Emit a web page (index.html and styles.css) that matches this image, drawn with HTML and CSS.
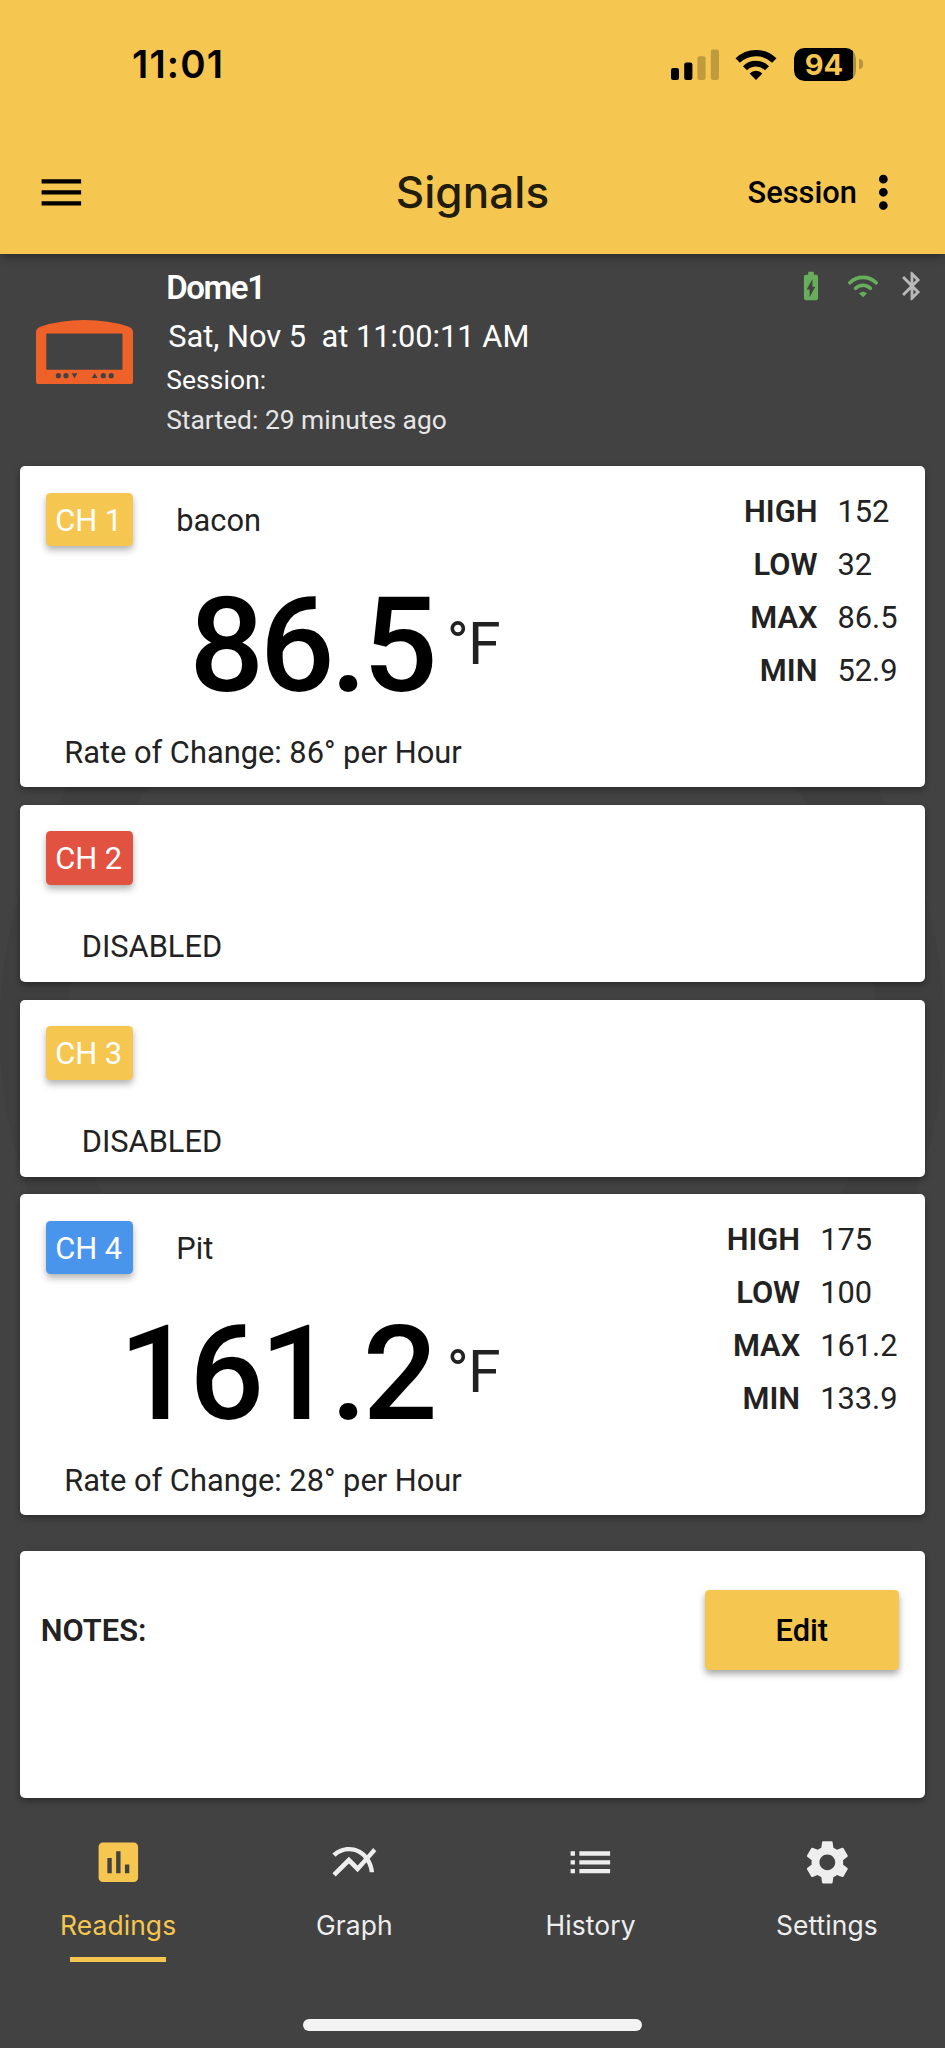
FILE: index.html
```html
<!DOCTYPE html>
<html lang="en">
  <head>
    <meta charset="UTF-8" />
    <meta name="viewport" content="width=device-width, initial-scale=1.0" />
    <title>Signals</title>
    <link rel="stylesheet" href="styles.css" />
  </head>
  <body>
    <header class="header">
      <div class="status-bar">
        <span class="time">11:01</span>
        <div class="status-icons">
          <svg class="cell" width="48" height="31" viewBox="0 0 48 31">
            <rect x="0" y="19" width="8" height="12" rx="2.2" />
            <rect x="13.2" y="13.6" width="8.2" height="17.4" rx="2.2" />
            <rect x="26.4" y="7.2" width="8.2" height="23.8" rx="2.2" opacity="0.22" />
            <rect x="39.8" y="0.4" width="8.2" height="30.6" rx="2.2" opacity="0.22" />
          </svg>
          <svg class="wifi" width="42" height="31" viewBox="0 0 42 31">
            <path d="M2.7 11.5 A26.2 26.2 0 0 1 39.3 11.5" fill="none" stroke="#000" stroke-width="6.2" />
            <path d="M10 19.2 A15.6 15.6 0 0 1 32 19.2" fill="none" stroke="#000" stroke-width="5.8" />
            <path d="M21 31 L14.6 24.4 A9.2 9.2 0 0 1 27.4 24.4 Z" />
          </svg>
          <div class="battery">94</div>
        </div>
      </div>
      <div class="toolbar">
        <svg class="icon" viewBox="0 0 24 24"><path d="M3 18h18v-2H3v2zm0-5h18v-2H3v2zm0-7v2h18V6H3z" /></svg>
        <h1>Signals</h1>
        <div class="toolbar-end">
          <span>Session</span>
          <svg class="icon" viewBox="0 0 24 24"><path d="M12 8c1.1 0 2-.9 2-2s-.9-2-2-2-2 .9-2 2 .9 2 2 2zm0 2c-1.1 0-2 .9-2 2s.9 2 2 2 2-.9 2-2-.9-2-2-2zm0 6c-1.1 0-2 .9-2 2s.9 2 2 2 2-.9 2-2-.9-2-2-2z" /></svg>
        </div>
      </div>
    </header>

    <main>
      <section class="device">
        <svg class="device-icon" width="97" height="64" viewBox="0 0 97 64">
          <path fill="#ee6229" fill-rule="evenodd" d="M0 62V12Q0 8 5 6.5Q24 0 48.5 0T92 6.5Q97 8 97 12V62Q97 64 95 64H2Q0 64 0 62ZM10.3 13.5V49.8H86.5V13.5Z" />
          <g fill="#424242">
            <circle cx="22.4" cy="55.7" r="2.6" />
            <circle cx="30" cy="55.7" r="2.6" />
            <path d="M35.6 53.3h5.8l-2.9 5zM55.8 58h5.8l-2.9-5z" />
            <circle cx="67.3" cy="55.7" r="2.6" />
            <circle cx="75.2" cy="55.7" r="2.6" />
          </g>
        </svg>
        <div class="device-info">
          <h2>Dome1</h2>
          <p class="date">Sat, Nov 5&nbsp; at 11:00:11 AM</p>
          <p class="session">Session:</p>
          <p class="started">Started: 29 minutes ago</p>
        </div>
        <div class="device-status">
          <svg width="34" height="34" viewBox="0 0 24 24" fill="#67ad5b"><path d="M15.67 4H14V2h-4v2H8.33C7.6 4 7 4.6 7 5.33v15.33C7 21.4 7.6 22 8.33 22h7.33c.74 0 1.34-.6 1.34-1.33V5.33C17 4.6 16.4 4 15.67 4zM11 20v-5.5H9L13 7v5.5h2L11 20z" /></svg>
          <svg width="30" height="23" viewBox="0 0 30 23" fill="none" stroke="#67ad5b">
            <path d="M1.9 7.8 A18.5 18.5 0 0 1 28.1 7.8" stroke-width="3.6" stroke-linecap="round" />
            <path d="M7.6 13.3 A10.5 10.5 0 0 1 22.4 13.3" stroke-width="3.6" stroke-linecap="round" />
            <path d="M15 22l-3.6-3.6q3.6-2.8 7.2 0z" fill="#67ad5b" stroke-width="0.6" />
          </svg>
          <svg width="34" height="34" viewBox="0 0 24 24" fill="#b9b9b9"><path d="M17.71 7.71L12 2h-1v7.59L6.41 5 5 6.41 10.59 12 5 17.59 6.41 19 11 14.41V22h1l5.71-5.71-4.3-4.29 4.3-4.29zM13 5.83l1.88 1.88L13 9.59V5.83zm1.88 10.46L13 18.17v-3.76l1.88 1.88z" /></svg>
        </div>
      </section>

      <section class="card">
        <div class="reading">
          <div class="channel"><span class="badge yellow">CH 1</span>bacon</div>
          <div class="temp"><b>86.5</b><span>°F</span></div>
          <p class="rate">Rate of Change: 86° per Hour</p>
        </div>
        <dl class="stats">
          <dt>HIGH</dt><dd>152</dd>
          <dt>LOW</dt><dd>32</dd>
          <dt>MAX</dt><dd>86.5</dd>
          <dt>MIN</dt><dd>52.9</dd>
        </dl>
      </section>

      <section class="card off">
        <span class="badge red">CH 2</span>
        <p class="disabled">DISABLED</p>
      </section>

      <section class="card off">
        <span class="badge yellow">CH 3</span>
        <p class="disabled">DISABLED</p>
      </section>

      <section class="card">
        <div class="reading">
          <div class="channel"><span class="badge blue">CH 4</span>Pit</div>
          <div class="temp"><b>161.2</b><span>°F</span></div>
          <p class="rate">Rate of Change: 28° per Hour</p>
        </div>
        <dl class="stats">
          <dt>HIGH</dt><dd>175</dd>
          <dt>LOW</dt><dd>100</dd>
          <dt>MAX</dt><dd>161.2</dd>
          <dt>MIN</dt><dd>133.9</dd>
        </dl>
      </section>

      <section class="card notes">
        <h3>NOTES:</h3>
        <button>Edit</button>
      </section>
    </main>

    <nav class="tabs">
      <a class="tab active">
        <svg class="icon" viewBox="0 0 24 24"><path d="M19 3H5c-1.1 0-2 .9-2 2v14c0 1.1.9 2 2 2h14c1.1 0 2-.9 2-2V5c0-1.1-.9-2-2-2zM9 17H7v-7h2v7zm4 0h-2V7h2v10zm4 0h-2v-4h2v4z" /></svg>
        Readings
      </a>
      <a class="tab">
        <svg class="icon" viewBox="0 0 24 24"><path d="M22 6.92l-1.41-1.41-2.85 3.21C15.68 6.4 12.83 5 9.61 5 6.72 5 4.07 6.16 2 8l1.42 1.42C5.12 7.93 7.27 7 9.61 7c2.74 0 5.09 1.26 6.77 3.24l-2.88 3.24-4-4L2 16.99l1.5 1.5 6-6.01 4 4 4.05-4.55c.75 1.35 1.25 2.9 1.44 4.55H21c-.22-2.3-.95-4.39-2.04-6.14L22 6.92z" /></svg>
        Graph
      </a>
      <a class="tab">
        <svg class="icon" viewBox="0 0 24 24"><path d="M3 13h2v-2H3v2zm0 4h2v-2H3v2zm0-8h2V7H3v2zm4 4h14v-2H7v2zm0 4h14v-2H7v2zM7 7v2h14V7H7z" /></svg>
        History
      </a>
      <a class="tab">
        <svg class="icon" viewBox="0 0 24 24"><path d="M19.14 12.94c.04-.3.06-.61.06-.94 0-.32-.02-.64-.07-.94l2.03-1.58c.18-.14.23-.41.12-.61l-1.92-3.32c-.12-.22-.37-.29-.59-.22l-2.39.96c-.5-.38-1.03-.7-1.62-.94l-.36-2.54c-.04-.24-.24-.41-.48-.41h-3.84c-.24 0-.43.17-.47.41l-.36 2.54c-.59.24-1.13.57-1.62.94l-2.39-.96c-.22-.08-.47 0-.59.22L2.74 8.87c-.12.21-.08.47.12.61l2.03 1.58c-.05.3-.09.63-.09.94s.02.64.07.94l-2.03 1.58c-.18.14-.23.41-.12.61l1.92 3.32c.12.22.37.29.59.22l2.39-.96c.5.38 1.03.7 1.62.94l.36 2.54c.05.24.24.41.48.41h3.84c.24 0 .44-.17.47-.41l.36-2.54c.59-.24 1.13-.56 1.62-.94l2.39.96c.22.08.47 0 .59-.22l1.92-3.32c.12-.22.07-.47-.12-.61l-2.01-1.58zM12 15.6c-1.98 0-3.6-1.62-3.6-3.6s1.62-3.6 3.6-3.6 3.6 1.62 3.6 3.6-1.62 3.6-3.6 3.6z" /></svg>
        Settings
      </a>
    </nav>
    <div class="home-indicator"></div>
  </body>
</html>
```

FILE: styles.css
```css
* {
  box-sizing: border-box;
  margin: 0;
  padding: 0;
}
body {
  width: 945px;
  height: 2048px;
  overflow: hidden;
  display: flex;
  flex-direction: column;
  font-family: Roboto, "Liberation Sans", sans-serif;
  font-size: 30.8px;
  color: #222;
  /* faint ring behind the cards */
  background: radial-gradient(circle at 472px 1030px, #424242 404px, #3f3f3f 405px, #3f3f3f 472px, #424242 473px);
}
.icon {
  width: 52.7px;
  height: 52.7px;
  fill: currentColor;
}

/* header */
.header {
  height: 254.3px;
  background: #f6c750;
  color: #000;
  box-shadow: 0 2px 10px rgba(0, 0, 0, 0.4);
}
.status-bar {
  height: 128px;
  padding: 0 89px 0 132px;
  display: flex;
  justify-content: space-between;
  align-items: center;
}
.time {
  font: 600 38.5px/1 Inter, sans-serif;
  letter-spacing: 1.1px;
  padding-top: 1px;
}
.status-icons {
  display: flex;
  align-items: center;
}
.wifi {
  margin: 0 17px 0 16px;
}
.battery {
  position: relative;
  width: 62px;
  height: 33px;
  padding-right: 2px;
  border-radius: 10.5px;
  background: linear-gradient(to right, #000 59px, #ab8c3c 59px);
  color: #f6c750;
  font: 700 29px/33px Inter, sans-serif;
  text-align: center;
}
.battery::after {
  content: "";
  position: absolute;
  left: 64.5px;
  top: 11.5px;
  width: 4px;
  height: 10px;
  border-radius: 0 4px 4px 0;
  background: #b8963f;
}
.toolbar {
  height: 128.6px;
  padding: 0 35.4px;
  display: grid;
  grid-template-columns: 1fr auto 1fr;
  align-items: center;
}
.toolbar h1 {
  font: 500 44px/1 Inter, sans-serif;
  letter-spacing: 0.1px;
  color: #221c0b;
}
.toolbar-end {
  display: flex;
  justify-content: flex-end;
  align-items: center;
  font-weight: 500;
}

/* device */
main {
  padding: 0 19.7px;
}
.device {
  height: 212px;
  padding: 8.4px 0 0 16.5px;
  display: flex;
  color: #fff;
}
.device-icon {
  margin: 57.3px 33px 0 0;
}
.device h2 {
  font-size: 33px;
  line-height: 50px;
  font-weight: 600;
  letter-spacing: -1.4px;
}
.date {
  line-height: 48.2px;
  padding-left: 2px;
}
.session {
  font-size: 26.4px;
  line-height: 38.2px;
  letter-spacing: 0.1px;
}
.started {
  font-size: 26.4px;
  line-height: 42.8px;
  color: #e6e6e6;
}
.device-status {
  height: 47px;
  margin-left: auto;
  margin-right: -4px;
  display: flex;
  align-items: center;
}
.device-status svg:nth-child(2) {
  margin: 0 17.5px 0 19.5px;
}

/* cards */
.card {
  height: 321px;
  margin-bottom: 17.7px;
  padding: 26.5px;
  display: flex;
  justify-content: space-between;
  background: #fff;
  border-radius: 5px;
  box-shadow: 0 3px 6px rgba(0, 0, 0, 0.35);
}
.badge {
  display: block;
  width: 86.6px;
  height: 53.5px;
  padding-left: 9px;
  line-height: 55px;
  color: #fff;
  border-radius: 4.5px;
  box-shadow: 0 4px 7px rgba(0, 0, 0, 0.3);
}
.yellow {
  background: #f6c750;
}
.red {
  background: #e15241;
}
.blue {
  background: #4a95ec;
}
.channel {
  height: 54px;
  display: flex;
  gap: 43.5px;
  line-height: 55px;
}
.temp {
  height: 132px;
  margin-top: 33.3px;
  display: flex;
  align-items: center;
}
.temp b {
  width: 387px;
  font-size: 131.9px;
  line-height: 132px;
  font-weight: 500;
  letter-spacing: -4.4px;
  text-align: right;
  color: #000;
}
.temp span {
  margin-left: 13.5px;
  padding-bottom: 5px;
  font-size: 59px;
  letter-spacing: -0.8px;
}
.rate {
  margin-top: 22.5px;
  padding-left: 18px;
  line-height: 36px;
}
.stats {
  display: grid;
  grid-template-columns: auto auto;
  grid-auto-rows: 53.1px;
  column-gap: 20px;
  margin: -7.8px 1.3px 0 0;
  line-height: 53px;
}
.stats dt {
  font-weight: 600;
  text-align: right;
}
.card.off {
  display: block;
  height: 177px;
}
.disabled {
  margin-top: 44.3px;
  padding-left: 35.5px;
  line-height: 36px;
}
.notes {
  height: 247.7px;
  margin: 35.2px 0 0;
  padding: 39.7px 26.5px 0 21px;
}
.notes h3 {
  font-size: inherit;
  font-weight: 600;
  line-height: 82px;
}
.notes button {
  width: 194px;
  height: 79.7px;
  border: none;
  border-radius: 4.5px;
  background: #f6c750;
  box-shadow: 0 4px 7px rgba(0, 0, 0, 0.35);
  font: 500 30.8px Roboto, sans-serif;
  color: #000;
}

/* bottom tabs */
.tabs {
  height: 164px;
  margin-top: 38px;
  display: grid;
  grid-template-columns: repeat(4, 1fr);
}
.tab {
  position: relative;
  display: flex;
  flex-direction: column;
  align-items: center;
  gap: 18.5px;
  font: 400 26.4px/36px Inter, sans-serif;
  letter-spacing: 0.1px;
  color: #eee;
}
.active {
  color: #f6c750;
}
.active::after {
  content: "";
  position: absolute;
  top: 121px;
  width: 95.3px;
  height: 5px;
  background: #f6c750;
}
.home-indicator {
  width: 338.5px;
  height: 11.3px;
  margin: 19px auto 0;
  border-radius: 6px;
  background: #f3f3f3;
}
```
